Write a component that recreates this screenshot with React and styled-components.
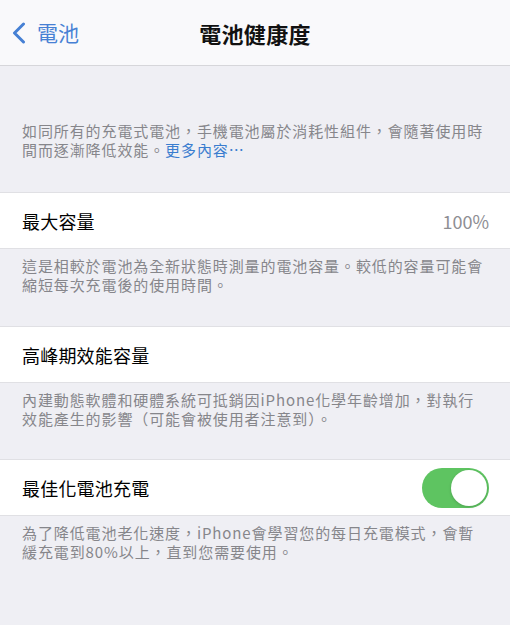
import React from "react";
import styled, { createGlobalStyle } from "styled-components";

const GlobalStyle = createGlobalStyle`
  html, body {
    margin: 0;
    padding: 0;
    background: #efeff4;
  }
  body {
    font-family: "Noto Sans CJK TC", "Noto Sans", sans-serif;
    -webkit-font-smoothing: antialiased;
  }
`;

const Page = styled.div`
  width: 510px;
  min-height: 625px;
  background: #efeff4;
  overflow: hidden;
`;

const NavBar = styled.div`
  height: 65px;
  background: #f9f9fb;
  border-bottom: 1px solid #d6d6da;
  display: grid;
  grid-template-columns: 1fr auto 1fr;
  align-items: center;
`;

const BackButton = styled.div`
  display: flex;
  align-items: center;
  gap: 11px;
  padding-left: 12px;
  color: #4680d4;
  font-size: 21px;
  line-height: 1;
`;

const NavTitle = styled.div`
  font-size: 22px;
  font-weight: 700;
  color: #111;
  letter-spacing: 0.3px;
`;

const Footnote = styled.p`
  margin: 0;
  padding: ${(p) => p.$top}px 22px ${(p) => p.$bottom}px;
  font-size: 15px;
  line-height: 19px;
  letter-spacing: 0.9px;
  color: #86868b;
`;

const Link = styled.span`
  color: #3a7dcf;
`;

const Row = styled.div`
  height: 55px;
  background: #fff;
  border-top: 1px solid #e0e0e4;
  border-bottom: 1px solid #e0e0e4;
  display: flex;
  align-items: center;
  justify-content: space-between;
  padding: 0 21px 0 22px;
`;

const Label = styled.span`
  font-size: 18px;
  color: #000;
  letter-spacing: 0.2px;
`;

const Value = styled.span`
  font-size: 18px;
  color: #8e8e93;
`;

const Toggle = styled.div`
  width: 67px;
  height: 40px;
  border-radius: 20px;
  background: ${(p) => (p.$on ? "#5ec461" : "#e5e5ea")};
  position: relative;
  flex-shrink: 0;
`;

const Knob = styled.div`
  position: absolute;
  top: 2px;
  left: ${(p) => (p.$on ? "29px" : "2px")};
  width: 36px;
  height: 36px;
  border-radius: 50%;
  background: #fff;
  box-shadow: 0 1px 3px rgba(0, 0, 0, 0.18);
`;

const Chevron = () => (
  <svg width="14" height="22" viewBox="0 0 14 22">
    <polyline
      points="11.5,2 2.5,11 11.5,20"
      fill="none"
      stroke="#4680d4"
      strokeWidth="3"
      strokeLinecap="round"
      strokeLinejoin="round"
    />
  </svg>
);

export default function App() {
  return (
    <Page>
      <GlobalStyle />
      <NavBar>
        <BackButton>
          <Chevron />
          <span>電池</span>
        </BackButton>
        <NavTitle>電池健康度</NavTitle>
        <div />
      </NavBar>

      <Footnote $top={55} $bottom={33}>
        如同所有的充電式電池，手機電池屬於消耗性組件，會隨著使用時
        <br />
        間而逐漸降低效能。<Link>更多內容⋯</Link>
      </Footnote>

      <Row>
        <Label>最大容量</Label>
        <Value>100%</Value>
      </Row>
      <Footnote $top={7} $bottom={32}>
        這是相較於電池為全新狀態時測量的電池容量。較低的容量可能會
        <br />
        縮短每次充電後的使用時間。
      </Footnote>

      <Row>
        <Label>高峰期效能容量</Label>
      </Row>
      <Footnote $top={7} $bottom={31}>
        內建動態軟體和硬體系統可抵銷因iPhone化學年齡增加，對執行
        <br />
        效能產生的影響（可能會被使用者注意到）。
      </Footnote>

      <Row>
        <Label>最佳化電池充電</Label>
        <Toggle $on>
          <Knob $on />
        </Toggle>
      </Row>
      <Footnote $top={7} $bottom={40}>
        為了降低電池老化速度，iPhone會學習您的每日充電模式，會暫
        <br />
        緩充電到80%以上，直到您需要使用。
      </Footnote>
    </Page>
  );
}
